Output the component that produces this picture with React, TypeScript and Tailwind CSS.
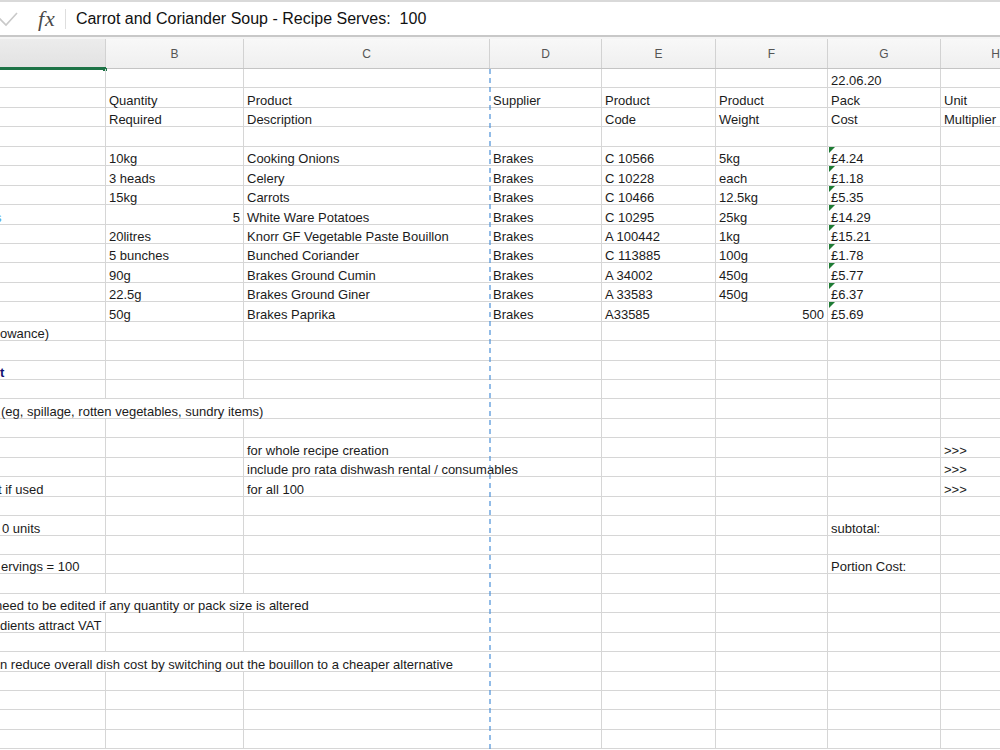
import React from "react";

type Cell = {
  t?: string;
  right?: boolean;
  cls?: string;
  tri?: boolean;
  w?: string;
  span?: number;
};

const WCLS = [
  "w-[106px]",
  "w-[138px]",
  "w-[246px]",
  "w-[112px]",
  "w-[114px]",
  "w-[112px]",
  "w-[113px]",
  "w-[110px]",
];

const rows: Record<number, Cell>[] = [
  { 6: { t: "22.06.20" } },
  { 1: { t: "Quantity" }, 2: { t: "Product" }, 3: { t: "Supplier" }, 4: { t: "Product" }, 5: { t: "Product" }, 6: { t: "Pack" }, 7: { t: "Unit" } },
  { 1: { t: "Required" }, 2: { t: "Description" }, 4: { t: "Code" }, 5: { t: "Weight" }, 6: { t: "Cost" }, 7: { t: "Multiplier" } },
  {},
  { 1: { t: "10kg" }, 2: { t: "Cooking Onions" }, 3: { t: "Brakes" }, 4: { t: "C 10566" }, 5: { t: "5kg" }, 6: { t: "£4.24", tri: true } },
  { 1: { t: "3 heads" }, 2: { t: "Celery" }, 3: { t: "Brakes" }, 4: { t: "C 10228" }, 5: { t: "each" }, 6: { t: "£1.18", tri: true } },
  { 1: { t: "15kg" }, 2: { t: "Carrots" }, 3: { t: "Brakes" }, 4: { t: "C 10466" }, 5: { t: "12.5kg" }, 6: { t: "£5.35", tri: true } },
  { 0: { t: "s", cls: "ml-[-8px] text-[#4aa6e6]" }, 1: { t: "5", right: true }, 2: { t: "White Ware Potatoes" }, 3: { t: "Brakes" }, 4: { t: "C 10295" }, 5: { t: "25kg" }, 6: { t: "£14.29", tri: true } },
  { 1: { t: "20litres" }, 2: { t: "Knorr GF Vegetable Paste Bouillon" }, 3: { t: "Brakes" }, 4: { t: "A 100442" }, 5: { t: "1kg" }, 6: { t: "£15.21", tri: true } },
  { 1: { t: "5 bunches" }, 2: { t: "Bunched Coriander" }, 3: { t: "Brakes" }, 4: { t: "C 113885" }, 5: { t: "100g" }, 6: { t: "£1.78", tri: true } },
  { 1: { t: "90g" }, 2: { t: "Brakes Ground Cumin" }, 3: { t: "Brakes" }, 4: { t: "A 34002" }, 5: { t: "450g" }, 6: { t: "£5.77", tri: true } },
  { 1: { t: "22.5g" }, 2: { t: "Brakes Ground Giner" }, 3: { t: "Brakes" }, 4: { t: "A 33583" }, 5: { t: "450g" }, 6: { t: "£6.37", tri: true } },
  { 1: { t: "50g" }, 2: { t: "Brakes Paprika" }, 3: { t: "Brakes" }, 4: { t: "A33585" }, 5: { t: "500", right: true }, 6: { t: "£5.69", tri: true } },
  { 0: { t: "owance)", cls: "ml-[-3px]" } },
  {},
  { 0: { t: "t", cls: "ml-[-3px] font-bold text-[#101070]" } },
  {},
  { 0: { t: "(eg, spillage, rotten vegetables, sundry items)", cls: "ml-[-2px]", w: "w-[490px]", span: 3 } },
  {},
  { 2: { t: "for whole recipe creation" }, 7: { t: ">>>" } },
  { 2: { t: "include pro rata dishwash rental / consumables" }, 7: { t: ">>>" } },
  { 0: { t: "t if used", cls: "ml-[-5px]" }, 2: { t: "for all 100" }, 7: { t: ">>>" } },
  {},
  { 0: { t: "0 units", cls: "ml-[-1px]" }, 6: { t: "subtotal:" } },
  {},
  { 0: { t: "ervings = 100", cls: "ml-[-2px]" }, 6: { t: "Portion Cost:" } },
  {},
  { 0: { t: "need to be edited if any quantity or pack size is altered", cls: "ml-[-8px]", w: "w-[490px]", span: 3 } },
  { 0: { t: "dients attract VAT", cls: "ml-[-3px]" } },
  {},
  { 0: { t: "n reduce overall dish cost by switching out the bouillon to a cheaper alternative", cls: "ml-[-3px]", w: "w-[490px]", span: 3 } },
  {},
  {},
  {},
  {},
];

function Row({ spec }: { spec: Record<number, Cell> }) {
  const cells: React.ReactNode[] = [];
  let i = 0;
  while (i < 8) {
    const c = spec[i];
    const span = c?.span ?? 1;
    const lastIdx = i + span - 1;
    const w = c?.w ?? WCLS[i];
    const borderR = lastIdx === 2 || lastIdx === 7 ? "" : "border-r border-r-[#d6d6d6]";
    cells.push(
      <div
        key={i}
        className={`${w} shrink-0 h-full relative flex items-end px-[3px] ${borderR} ${
          c?.right ? "justify-end" : "justify-start"
        }`}
      >
        {c?.tri && (
          <svg className="absolute left-[1px] top-0" width="6" height="6" viewBox="0 0 6 6">
            <polygon points="0,0 6,0 0,6" fill="#1e7b34" />
          </svg>
        )}
        {c?.t && (
          <span className={`whitespace-pre leading-[13px] ${c.cls ?? ""}`}>{c.t}</span>
        )}
      </div>
    );
    i += span;
  }
  return (
    <div className="flex h-[19.45px] border-b border-[#d6d6d6] box-border">{cells}</div>
  );
}

export default function App() {
  const headers = ["", "B", "C", "D", "E", "F", "G", "H"];
  return (
    <div
      className="w-[1000px] h-[750px] overflow-hidden bg-white text-[13px] text-[#1b1b1b]"
      style={{ fontFamily: '"Liberation Sans", Arial, sans-serif' }}
    >
      {/* formula bar */}
      <div className="h-[37px] border-t-2 border-t-[#d9d9d9] border-b-2 border-b-[#c8c8c8] flex items-center bg-white">
        <svg width="20" height="20" viewBox="0 0 20 20" className="ml-0 shrink-0">
          <path d="M-1 9 L6 16 L17 4" fill="none" stroke="#c9c9c9" strokeWidth="1.6" />
        </svg>
        <span
          className="ml-[18px] text-[22px] italic text-[#4a4a4a] leading-none tracking-[1px]"
          style={{ fontFamily: '"Liberation Serif", "DejaVu Serif", serif' }}
        >
          fx
        </span>
        <div className="ml-[9px] w-px h-[20px] bg-[#dedede]" />
        <span className="ml-[10px] text-[16px] text-[#111] whitespace-pre">
          Carrot and Coriander Soup - Recipe Serves:  100
        </span>
      </div>
      <div className="h-[2px] bg-[#f4f4f4]" />
      {/* column header */}
      <div className="h-[30px] flex border-b border-[#c4c4c4]">
        {headers.map((h, i) => (
          <div
            key={i}
            className={`${WCLS[i]} shrink-0 relative flex items-center justify-center text-[12px] text-[#555] border-r border-[#d2d2d2] ${
              i === 0
                ? "bg-gradient-to-b from-[#ececec] to-[#e2e2e2]"
                : "bg-gradient-to-b from-[#f8f8f8] to-[#efefef]"
            }`}
          >
            {h}
            {i === 0 && (
              <>
                <div className="absolute left-0 right-0 bottom-[-2px] h-[3px] bg-[#1d7346]" />
                <div className="absolute right-[-2px] bottom-[-3px] w-[4px] h-[4px] bg-[#1d7346]" />
              </>
            )}
          </div>
        ))}
      </div>
      {/* grid */}
      <div className="relative">
        {rows.map((r, idx) => (
          <Row key={idx} spec={r} />
        ))}
        <svg className="absolute left-[489px] top-0" width="2" height="700">
          <line x1="1" y1="0" x2="1" y2="700" stroke="#4a8fd8" strokeWidth="1.2" strokeDasharray="5 4" />
        </svg>
      </div>
    </div>
  );
}
